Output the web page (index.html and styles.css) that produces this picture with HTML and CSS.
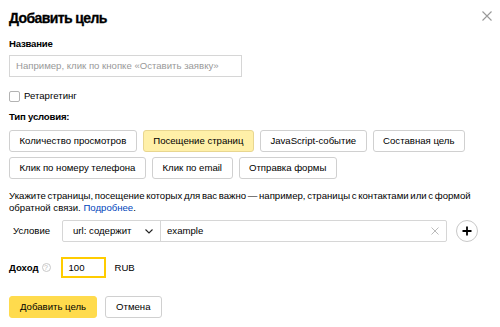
FILE: index.html
```html
<!DOCTYPE html>
<html lang="ru">
<head>
<meta charset="utf-8">
<link rel="stylesheet" href="styles.css">
</head>
<body>
<div class="dialog">
  <div class="head">
    <h1 class="title">Добавить цель</h1>
    <button class="close" aria-label="Закрыть">
      <svg width="10" height="10" viewBox="0 0 10 10"><path d="M0.5 0.5 L9.5 9.5 M9.5 0.5 L0.5 9.5" stroke="#999" stroke-width="1.1" fill="none"/></svg>
    </button>
  </div>
  <div class="label">Название</div>
  <div class="name-input"><span class="placeholder">Например, клик по кнопке «Оставить заявку»</span></div>
  <label class="check"><span class="box"></span>Ретаргетинг</label>
  <div class="label type-label">Тип условия:</div>
  <div class="types">
    <span class="btn">Количество просмотров</span>
    <span class="btn active">Посещение страниц</span>
    <span class="btn">JavaScript-событие</span>
    <span class="btn">Составная цель</span>
    <span class="btn">Клик по номеру телефона</span>
    <span class="btn">Клик по email</span>
    <span class="btn">Отправка формы</span>
  </div>
  <p class="hint">Укажите страницы, посещение которых для вас важно — например, страницы с контактами или с формой <span class="tail">обратной связи. <a href="#">Подробнее</a>.</span></p>
  <div class="cond">
    <span class="cond-label">Условие</span>
    <div class="cond-field">
      <div class="select"><span>url: содержит</span>
        <svg width="8" height="5" viewBox="0 0 8 5"><path d="M0.5 0.5 L4 4 L7.5 0.5" stroke="#222" stroke-width="1.1" fill="none"/></svg>
      </div>
      <div class="value"><span>example</span>
        <svg class="clear" width="8" height="8" viewBox="0 0 8 8"><path d="M0.5 0.5 L7.5 7.5 M7.5 0.5 L0.5 7.5" stroke="#bbb" stroke-width="1" fill="none"/></svg>
      </div>
    </div>
    <span class="plus">
      <svg width="10" height="10" viewBox="0 0 10 10"><path d="M5 0.5 V9.5 M0.5 5 H9.5" stroke="#000" stroke-width="1.8" fill="none"/></svg>
    </span>
  </div>
  <div class="income">
    <span class="income-label">Доход</span>
    <span class="q">?</span>
    <span class="income-input">100</span>
    <span class="cur">RUB</span>
  </div>
  <div class="actions">
    <span class="btn primary">Добавить цель</span>
    <span class="btn">Отмена</span>
  </div>
</div>
</body>
</html>
```
FILE: styles.css
```css
* { box-sizing: border-box; }
html, body { margin: 0; padding: 0; background: #fff; }
body {
  font-family: "Liberation Sans", Arial, sans-serif;
  font-size: 9.6px;
  line-height: 14px;
  color: #000;
}
.dialog { padding: 0 8px 0 9px; width: 500px; }
.head { display: flex; justify-content: space-between; align-items: flex-start; }
.title {
  margin: 8px 0 0;
  font-size: 14px;
  font-weight: bold;
  letter-spacing: -0.6px;
  line-height: 20px;
  -webkit-text-stroke: 0.3px #000;
}
.close {
  border: 0; background: none; padding: 0;
  margin: 11px 0 0 0;
  width: 10px; height: 10px;
  display: flex;
}
.label { font-weight: bold; font-size: 9.6px; line-height: 14px; margin-top: 9px; letter-spacing: -0.2px; }
.name-input {
  margin-top: 4px;
  width: 233px; height: 22px;
  border: 1px solid #d6d6d6;
  padding: 0 6px;
  display: flex; align-items: center;
}
.placeholder { color: #999; }
.check { display: flex; align-items: center; margin-top: 12px; }
.box {
  width: 11px; height: 11px;
  border: 1px solid #b3b3b3; border-radius: 2px;
  margin-right: 4px;
}
.type-label { margin-top: 7px; }
.types {
  display: flex; flex-wrap: wrap; gap: 5px 6px;
  margin-top: 6px; width: 470px;
}
.btn {
  display: inline-flex; align-items: center; justify-content: center;
  height: 22px; padding: 0 10px;
  border: 1px solid #d0d0d0; border-radius: 3px;
  background: #fff; white-space: nowrap;
}
.types .btn { padding: 0 9.5px; }
.btn.active { background: #fff0a8; border-color: #e8d690; }
.hint { margin: 11px 0 0; line-height: 12px; width: 486px; word-spacing: -1px; }
.hint .tail { word-spacing: normal; }
.hint a { color: #04b; text-decoration: none; }
.cond { display: flex; align-items: center; margin-top: 6px; }
.cond-label { width: 53px; padding-left: 4px; }
.cond-field {
  display: flex; height: 22px;
  border: 1px solid #d6d6d6; border-radius: 2px;
}
.select {
  width: 98px; display: flex; align-items: center; justify-content: space-between;
  padding: 0 7px 0 10px; border-right: 1px solid #d6d6d6;
}
.value {
  width: 285px; display: flex; align-items: center; justify-content: space-between;
  padding: 0 7px 0 6px;
}
.plus {
  margin-left: 9px;
  width: 22px; height: 22px; border-radius: 50%;
  border: 1px solid #c8c8c8;
  display: flex; align-items: center; justify-content: center;
}
.income { display: flex; align-items: center; margin-top: 15px; }
.income-label { font-weight: bold; }
.q {
  width: 9px; height: 9px; border-radius: 50%;
  border: 1px solid #c8c8c8; color: #bbb;
  font-size: 7px; line-height: 7px;
  display: flex; align-items: center; justify-content: center;
  margin-left: 3px;
}
.income-input {
  margin-left: 10px;
  width: 45px; height: 21px;
  border: 2px solid #fc0;
  display: flex; align-items: center; padding-left: 6px;
}
.cur { margin-left: 9px; }
.actions { display: flex; gap: 8px; margin-top: 18px; }
.btn.primary { background: #ffdb4d; border-color: #ffdb4d; }
```
